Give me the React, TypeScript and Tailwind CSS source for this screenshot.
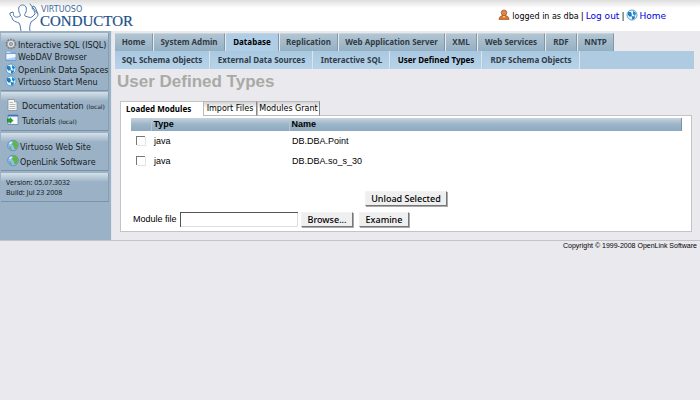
import React from "react";

const topTabs = [
  ["Home", "w-[38px]"],
  ["System Admin", "w-[71px]"],
  ["Database", "w-[53px]"],
  ["Replication", "w-[58px]"],
  ["Web Application Server", "w-[106px]"],
  ["XML", "w-[31px]"],
  ["Web Services", "w-[67px]"],
  ["RDF", "w-[31px]"],
  ["NNTP", "w-[36px]"],
];

const subTabs = [
  ["SQL Schema Objects", "w-[95px]"],
  ["External Data Sources", "w-[102px]"],
  ["Interactive SQL", "w-[76px]"],
  ["User Defined Types", "w-[91px]"],
  ["RDF Schema Objects", "w-[97px]"],
];

const rows = [
  { type: "java", name: "DB.DBA.Point" },
  { type: "java", name: "DB.DBA.so_s_30" },
];

const verdana = "font-['DejaVu_Sans',sans-serif]";
const tahoma = "font-['Noto_Sans',sans-serif]";

function Logo() {
  return (
    <svg width="130" height="28" viewBox="0 0 130 28" className="block" role="img" aria-label="Virtuoso Conductor">
      <g fill="none" stroke="#4f7aab" strokeWidth="1" strokeLinecap="round" strokeLinejoin="round">
        <path d="M11 13c1-1 0-2-1-4-1-4 0-7 3.500-7S18 5 17 9c-1 2-2 3-1 4 3 1 5 2 7 1l3-3c0-3-2-4-3-6l1-2 2 1 3 7c0 2-1 3-3 5l-4 3c-1 3-2 6-1 9" />
        <path d="M11 13c-2 1-4 2-6 0-1-1 0-2-1-4L1 10l0 2c2 1 2 4 3 5 2 2 4 2 6 3 2 3 1 5 2 8M21 1l7 9" />
      </g>
      <text x="32" y="9" fontSize="8" fill="#3f6b9d" className="font-['DejaVu_Sans',sans-serif]">VIRTUOSO</text>
      <text x="31" y="23" fontSize="15" fill="#1d5089" stroke="#1d5089" strokeWidth=".2" className="font-['Liberation_Serif',serif]">CONDUCTOR</text>
    </svg>
  );
}

function GearIcon() {
  return (
    <svg width="12" height="12" viewBox="0 0 12 12" className="shrink-0">
      <circle cx="6" cy="6" r="4.6" fill="none" stroke="#777a80" strokeWidth="1.5" strokeDasharray="1.8 1.1" />
      <circle cx="6" cy="6" r="3.8" fill="#e4e4e8" stroke="#85888e" strokeWidth=".7" />
      <circle cx="6" cy="6" r="1.6" fill="#a9b7c4" stroke="#777" strokeWidth=".7" />
    </svg>
  );
}

function FolderIcon() {
  return (
    <svg width="12" height="12" viewBox="0 0 12 12" className="shrink-0">
      <path d="M1 1h4l1 1.500h4V5H1z" fill="#c9def5" stroke="#6b93c6" strokeWidth=".6" />
      <path d="M1 3.500h10v7H1z" fill="#a9cdf4" stroke="#5e8bc6" strokeWidth=".7" />
      <path d="M1.500 4h9v3l-9 2z" fill="#eff7ff" />
    </svg>
  );
}

function GlobeIcon({ green = false }: { green?: boolean }) {
  return green ? (
    <svg width="12" height="13" viewBox="0 0 12 13" className="shrink-0">
      <circle cx="6" cy="6.500" r="5.300" fill="#8dbdf3" stroke="#5a88c8" strokeWidth=".8" />
      <path d="M5 1.500l4 0 2 3v3l-2 3-2-1 0-2-2-2 1-2zM2 7l2 1 1 3-2-1z" fill="#62b548" />
      <path d="M2.500 5 4.500 3" stroke="#e8f7ff" strokeWidth="1.500" />
    </svg>
  ) : (
    <svg width="12" height="12" viewBox="0 0 12 12" className="shrink-0">
      <circle cx="6" cy="6" r="5" fill="#e4f3fd" stroke="#4a97cc" strokeWidth=".9" />
      <path d="M2 3l3 0 1 3-2 2-2-2zM7 2l3 2-1 3-2-2zM6 8l3-1-1 3-2 .5z" fill="#2483c2" />
      <path d="M2 5l7 4" stroke="#1768a8" strokeWidth=".7" />
    </svg>
  );
}

function DocumentIcon() {
  return (
    <svg width="11" height="12" viewBox="0 0 11 12" className="shrink-0">
      <path d="M1 .5h6.500l2.500 2.500v8.500H1z" fill="#f7f7f4" stroke="#8a8d92" strokeWidth=".8" />
      <path d="M7.500.5V3H10" fill="#c8c8c8" stroke="#83878c" strokeWidth=".6" />
      <path d="M2.500 3.500h3.500M2.500 5.500h6M2.500 7.500h6M2.500 9.500h6" stroke="#a5a8ad" strokeWidth=".8" />
    </svg>
  );
}

function TutorialIcon() {
  return (
    <svg width="12" height="12" viewBox="0 0 12 12" className="shrink-0">
      <path d="M1 1h10v9.500H1z" fill="#f4f8ff" stroke="#5b82bd" strokeWidth=".8" />
      <path d="M1 1h10v1.500H1z" fill="#3f73bf" />
      <path d="M0 5h3V3.500L6 6.500 3 9.500V8H0z" fill="#28a428" stroke="#127012" strokeWidth=".5" />
    </svg>
  );
}

function UserIcon() {
  return (
    <svg width="12" height="12" viewBox="0 0 12 12" className="shrink-0">
      <path d="M1 10.500c0-3 2-4 5-4s5 1 5 4z" fill="#dd7626" stroke="#8f4518" strokeWidth=".6" />
      <circle cx="6" cy="3.800" r="2.800" fill="#e0894a" stroke="#9a5426" strokeWidth=".7" />
      <path d="M4.500 7 6 9l1.500-2z" fill="#f8d5ad" />
    </svg>
  );
}

function Panel({ children, className }: { children: React.ReactNode; className: string }) {
  return (
    <div className={`border-r border-b border-r-[#849fb5] border-b-[#7892a8] bg-[#9bb2c6] bg-linear-to-b from-[#d6e1e8] to-[#9bb2c6] to-[9px] ${className}`}>
      {children}
    </div>
  );
}

function SideLink({ icon, children, className = "" }: { icon: React.ReactNode; children: React.ReactNode; className?: string }) {
  return (
    <a href="#" className={`flex items-center whitespace-nowrap ${className}`}>
      {icon}
      <span className="pt-1">{children}</span>
    </a>
  );
}

const button =
  "h-[15px] border border-t-[#f2f2f2] border-l-[#f2f2f2] border-r-[#777] border-b-[#777] shadow-[1px_1px_0_#aaa] bg-[#efefef] text-center text-[9px] leading-3 font-medium whitespace-nowrap";

export default function App() {
  return (
    <div className="min-h-screen bg-[#e9e9ee] text-black font-['Liberation_Sans',sans-serif]">
      <header className="flex h-[31px] justify-between bg-white bg-linear-to-b from-[#dedede] to-white to-[8px] pt-[3px] pl-[9px]">
        <Logo />
        <div className={`flex h-7 items-center pr-[34px] text-[9px] ${verdana}`}>
          <span className="pb-1"><UserIcon /></span>
          <span className="ml-[2px] text-[8px]">logged in as dba</span>
          <span className="mx-[2px]">|</span>
          <a href="#" className="text-[#0000d8]">Log out</a>
          <span className="mx-[2px]">|</span>
          <span className="pb-1"><GlobeIcon /></span>
          <a href="#" className="ml-px text-[#0000d8]">Home</a>
        </div>
      </header>

      <div className="flex border-b border-[#c4c4c8]">
        <aside className={`w-28 shrink-0 border-r border-[#dfe5ea] bg-[#9bb2c6] pt-[2px] pr-[2px] pl-px text-[8px] text-[#151b22] ${verdana}`}>
          <Panel className="mb-px h-[58px] pt-1 pl-1">
            <SideLink className="h-[13px] gap-px" icon={<GearIcon />}>Interactive SQL (ISQL)</SideLink>
            <SideLink className="h-[12px] gap-px" icon={<FolderIcon />}>WebDAV Browser</SideLink>
            <SideLink className="h-[13px] gap-px" icon={<GlobeIcon />}>OpenLink Data Spaces</SideLink>
            <SideLink className="h-[12px] gap-px" icon={<GlobeIcon />}>Virtuoso Start Menu</SideLink>
          </Panel>
          <Panel className="mb-[2px] h-[39px] pt-[5px] pl-[6px]">
            <SideLink className="h-[15px] gap-1" icon={<DocumentIcon />}>Documentation <small className="text-[6px]">(local)</small></SideLink>
            <SideLink className="h-[15px] gap-[3px]" icon={<TutorialIcon />}>Tutorials <small className="text-[6px]">(local)</small></SideLink>
          </Panel>
          <Panel className="mb-[2px] h-[38px] pt-[5px] pl-[6px]">
            <SideLink className="h-[15px] gap-px" icon={<GlobeIcon green />}>Virtuoso Web Site</SideLink>
            <SideLink className="h-[15px] gap-px" icon={<GlobeIcon green />}>OpenLink Software</SideLink>
          </Panel>
          <Panel className={`h-[29px] pt-[5px] pl-[5px] text-[7px] leading-[10px] ${tahoma}`}>
            <p>Version: 05.07.3032</p>
            <p>Build: Jul 23 2008</p>
          </Panel>
        </aside>

        <main className="min-w-0 flex-1 pt-[2px] pl-[3px]">
          <nav className={`mr-[6px] text-[8px] font-bold text-[#303c48] ${tahoma}`}>
            <div className="flex gap-px">
              {topTabs.map(([label, width]) => (
                <a key={label} href="#" className={`${width} h-[18px] border-t border-r border-t-[#c8d4dc] border-r-[#8299aa] text-center leading-[16px] whitespace-nowrap ${label === "Database" ? "bg-[#afcde4] text-black" : "bg-linear-to-b from-[#b3c5d2] to-[#94b0c3]"}`}>
                  {label}
                </a>
              ))}
            </div>
            <div className="flex h-[18px] gap-px bg-[#afcbe2]">
              {subTabs.map(([label, width]) => (
                <a key={label} href="#" className={`${width} border-r border-[#dce5ec] bg-linear-to-b from-[#a9c9e1] to-[#b7d3e9] text-center leading-[18px] whitespace-nowrap ${label === "User Defined Types" ? "text-black" : ""}`}>
                  {label}
                </a>
              ))}
            </div>
          </nav>

          <h1 className="pt-[3px] pl-[2px] text-[17px] leading-5 font-bold text-[#aaa9a5]">User Defined Types</h1>

          <div className="pt-[9px] pr-2 pb-2 pl-[5px]">
            <div className={`relative z-10 -mb-px flex items-start text-[8px] ${verdana}`} role="tablist">
              <button role="tab" aria-selected="true" className={`h-[15px] w-[83px] border-t border-l border-[#c4c4c8] bg-white pl-[5px] text-left leading-[14px] font-bold ${tahoma}`}>Loaded Modules</button>
              <button role="tab" aria-selected="false" className="h-[15px] w-[54px] border border-[#bbb] border-r-[#888] bg-linear-to-b from-[#d4d4d4] to-white to-[7px] leading-3">Import Files</button>
              <button role="tab" aria-selected="false" className="h-[15px] w-[63px] border border-[#bbb] border-r-[#888] bg-linear-to-b from-[#d4d4d4] to-white to-[7px] leading-3">Modules Grant</button>
            </div>
            <section className="border border-[#c4c4c8] bg-white pt-[2px] pr-[9px] pb-1 pl-[10px]">
              <table className="w-full table-fixed border-collapse text-left text-[9px]">
                <thead>
                  <tr className="h-[13px] bg-linear-to-b from-[#c6d4de] via-[#9bb4c7] to-[#8faabf] leading-[13px]">
                    <th className="w-5 border-r border-[#b5c7d4] p-0" aria-label="Select" />
                    <th className="w-[138px] border-r border-[#b5c7d4] p-0 pl-[2px]">Type</th>
                    <th className="border-r border-[#7892a8] p-0 pl-[2px]">Name</th>
                  </tr>
                </thead>
                <tbody>
                  {rows.map((row) => (
                    <tr key={row.name} className="h-5">
                      <td className="p-0 pb-[2px] pl-[5px]">
                        <input type="checkbox" aria-label={row.name} className="block size-[9px] appearance-none border-t border-l border-[#777] bg-white shadow-[1px_1px_0_#e4e4e4]" />
                      </td>
                      <td className="p-0 pt-px pl-[3px]">{row.type}</td>
                      <td className="p-0 pt-px pl-[3px]">{row.name}</td>
                    </tr>
                  ))}
                </tbody>
              </table>
              <div className={`flex justify-center pt-[20px] pr-[1px] ${tahoma}`}>
                <button className={`${button} w-[82px]`}>Unload Selected</button>
              </div>
              <div className="flex items-center gap-[3px] pt-[6px] pl-[2px] text-[9px]">
                <label htmlFor="module-file" className="w-11 whitespace-nowrap">Module file</label>
                <input id="module-file" type="text" className="h-[15px] w-[118px] border-t border-l border-[#555] bg-white px-1 shadow-[inset_-1px_-1px_0_#ddd]" />
                <button className={`${button} ${tahoma} w-[52px]`}>Browse...</button>
                <button className={`${button} ${tahoma} ml-[3px] w-[50px]`}>Examine</button>
              </div>
            </section>
          </div>
        </main>
      </div>
      <footer className="pr-[3px] text-right text-[7px] leading-[9px]">Copyright © 1999-2008 OpenLink Software</footer>
    </div>
  );
}
